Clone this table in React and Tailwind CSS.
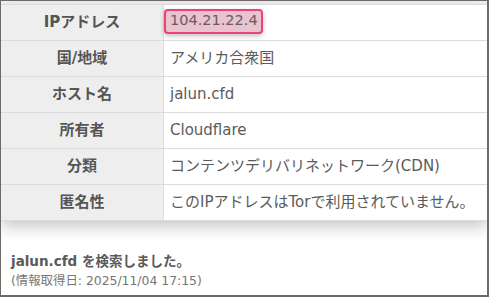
const rows = [
  { label: 'IPアドレス', value: '104.21.22.4', badge: true },
  { label: '国/地域', value: 'アメリカ合衆国' },
  { label: 'ホスト名', value: 'jalun.cfd' },
  { label: '所有者', value: 'Cloudflare' },
  { label: '分類', value: 'コンテンツデリバリネットワーク(CDN)' },
  { label: '匿名性', value: 'このIPアドレスはTorで利用されていません。' },
];

const App = () => {
  return (
    <div className="w-[489px] h-[297px] bg-white border-t border-l border-r-2 border-b-2 border-[#6d6964] overflow-hidden flex flex-col font-['DejaVu_Sans','Noto_Sans_CJK_JP',sans-serif]">
      {/* top strip */}
      <div className="h-[3px] bg-[#f1f1f1] shrink-0" />

      {/* info table */}
      <div className="bg-white shadow-[0_6px_14px_rgba(0,0,0,0.22)] border-b border-[#dcdcdc]">
        {rows.map((row) => (
          <div key={row.label} className="flex h-[36px] border-t border-[#dcdcdc]">
            <div className="w-[163px] shrink-0 bg-[#eeeeee] border-r border-[#dcdcdc] flex items-center justify-center text-[15px] font-bold text-[#555]">
              {row.label}
            </div>
            <div className="flex-1 flex items-center text-[15px] text-[#5b5b5b]">
              {row.badge ? (
                <span className="mt-[-3px] h-[25px] flex items-center pl-[4px] pr-[3px] text-[14.5px] bg-[#e9c3cf] border-2 border-[#ec4276] rounded-[4px] shadow-[0_2px_5px_rgba(0,0,0,0.25)] text-[#6a5a62]">
                  {row.value}
                </span>
              ) : (
                <span className="pl-[6px]">{row.value}</span>
              )}
            </div>
          </div>
        ))}
      </div>

      {/* search note */}
      <div className="pl-[10px] pt-[30px] flex flex-col">
        <p className="text-[13.5px] font-bold text-[#5a5a5a] leading-[21px]">jalun.cfd を検索しました。</p>
        <p className="text-[12.4px] text-[#777] leading-[18px]">(情報取得日: 2025/11/04 17:15)</p>
      </div>
    </div>
  );
};

export default App;
